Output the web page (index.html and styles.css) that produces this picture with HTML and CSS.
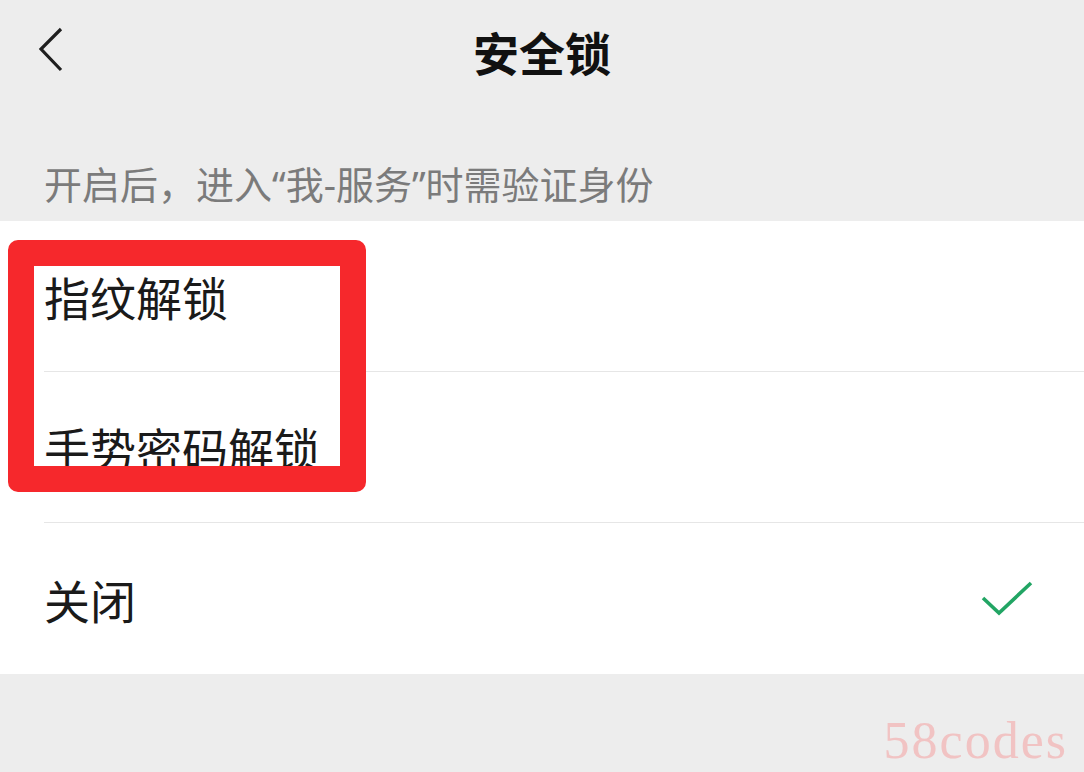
FILE: index.html
```html
<!DOCTYPE html>
<html lang="zh-CN">
<head>
  <meta charset="UTF-8">
  <meta name="viewport" content="width=device-width, initial-scale=1.0">
  <title>安全锁</title>
  <link rel="stylesheet" href="styles.css">
</head>
<body>
  <header class="nav">
    <a class="back" href="#" aria-label="返回">
      <svg width="30" height="48" viewBox="0 0 30 48">
        <path d="M23 3 L3 23 L23 44" fill="none" stroke="#1f1f1f" stroke-width="3.2"/>
      </svg>
    </a>
    <h1>安全锁</h1>
  </header>

  <main>
    <p class="desc">开启后，进入“我-服务”时需验证身份</p>

    <ul class="options">
      <li class="option">指纹解锁</li>
      <li class="option">手势密码解锁</li>
      <li class="option">
        关闭
        <svg class="check" width="54" height="38" viewBox="0 0 54 38">
          <path d="M3 18 L19 33 L51 3" fill="none" stroke="#22a564" stroke-width="3.6"/>
        </svg>
      </li>
    </ul>

    <div class="highlight"></div>
  </main>

  <div class="watermark">58codes</div>
</body>
</html>
```

FILE: styles.css
```css
body {
  margin: 0;
  background-color: #ededed;
  font-family: "Noto Sans CJK SC", "Noto Sans", sans-serif;
  color: #1a1a1a;
  height: 772px;
  overflow: hidden;
  position: relative;
}
.nav {
  height: 102px;
  display: flex;
  align-items: center;
  justify-content: center;
  position: relative;
}
.nav h1 {
  margin: 0;
  font-size: 46px;
  font-weight: 700;
  line-height: 1;
  color: #111;
}
.back {
  position: absolute;
  left: 38px;
  top: 26px;
  display: flex;
}
main {
  position: relative;
}
.desc {
  margin: 0;
  padding: 59px 44px 14px;
  font-family: "Noto Sans", "Noto Sans CJK SC", sans-serif;
  font-size: 38px;
  line-height: 46px;
  color: #7b7b7b;
}
.options {
  list-style: none;
  margin: 0;
  padding: 0;
  background-color: white;
}
.option {
  height: 151px;
  box-sizing: border-box;
  margin-left: 44px;
  padding-right: 50px;
  display: flex;
  align-items: center;
  justify-content: space-between;
  font-size: 46px;
  border-bottom: 1px solid #e6e6e6;
}
.option:last-child {
  border-bottom: none;
}
.highlight {
  position: absolute;
  left: 8px;
  top: 138px;
  width: 358px;
  height: 252px;
  box-sizing: border-box;
  border: 26px solid #f6282c;
  border-radius: 10px;
}
.watermark {
  position: absolute;
  right: 16px;
  bottom: 2px;
  font-family: "Liberation Serif", serif;
  font-size: 52px;
  letter-spacing: 2px;
  color: #f1c3c3;
}
```
